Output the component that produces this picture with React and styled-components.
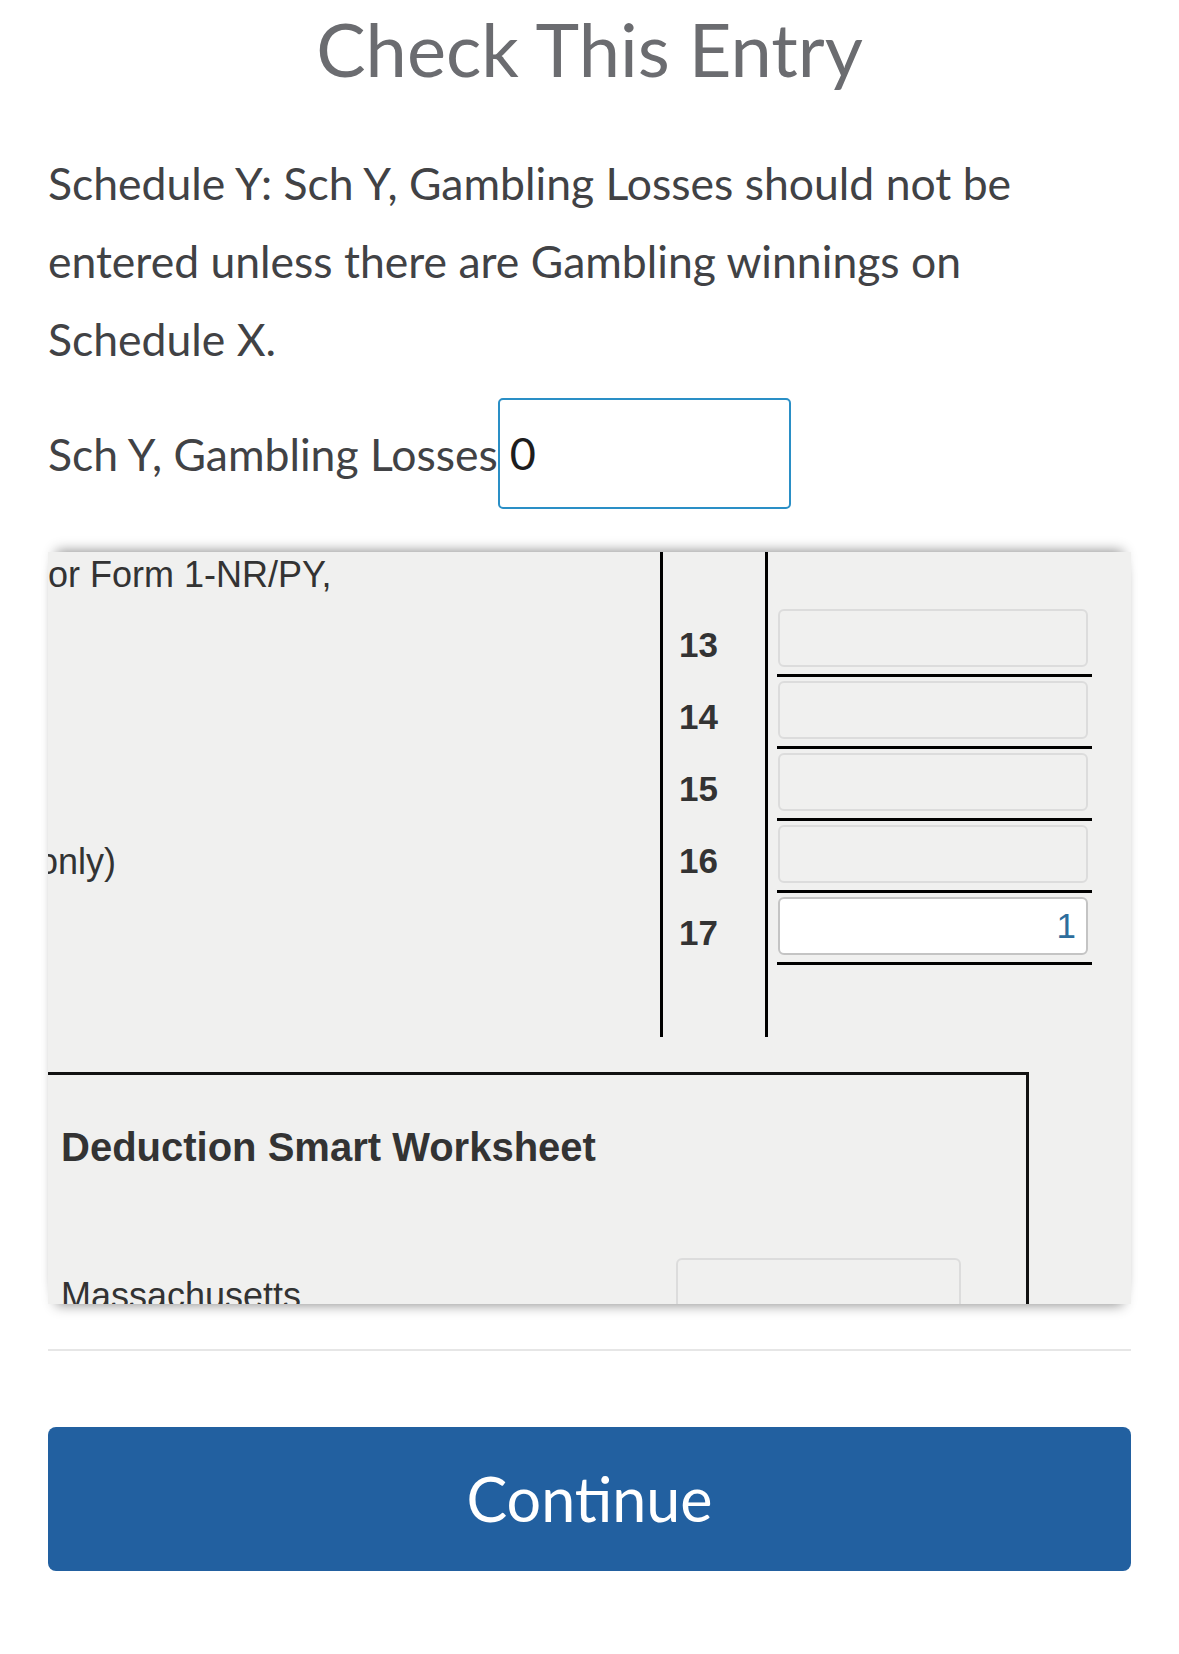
import React from 'react';
import styled, { createGlobalStyle } from 'styled-components';

const GlobalStyle = createGlobalStyle`
  html, body {
    margin: 0;
    padding: 0;
    background: #ffffff;
  }
  * {
    box-sizing: border-box;
  }
`;

const Page = styled.div`
  width: 1179px;
  padding: 0 48px 40px 48px;
  font-family: 'Lato', 'Open Sans', sans-serif;
`;

const Title = styled.h1`
  margin: 5px 0 0;
  text-align: center;
  font-size: 74px;
  font-weight: 400;
  line-height: 1.2;
  color: #6b6c70;
`;

const Message = styled.p`
  margin: 50px 0 0;
  font-size: 44.5px;
  line-height: 78px;
  color: #414245;
`;

const EntryRow = styled.div`
  display: flex;
  align-items: center;
  margin-top: 20px;
  font-size: 44.5px;
  color: #414245;
`;

const EntryInput = styled.input`
  width: 293px;
  height: 111px;
  padding: 0 0 0 10px;
  border: 2px solid #2a8fc6;
  border-radius: 5px;
  font-family: 'Lato', 'Open Sans', sans-serif;
  font-size: 45px;
  color: #1d1d1d;
  background: #fff;
  outline: none;
`;

const Panel = styled.div`
  margin-top: 43px;
  height: 752px;
  background: #f0f0ef;
  overflow: hidden;
  box-shadow: 0 -9px 12px -8px rgba(0, 0, 0, 0.45),
    0 9px 12px -8px rgba(0, 0, 0, 0.45);
  font-family: 'Liberation Sans', Arial, sans-serif;
  color: #333;
`;

const LineGrid = styled.div`
  display: grid;
  grid-template-columns: 612px 108px 324px;
  grid-template-rows: 57px repeat(5, 72px) 68px;
`;

const LabelCell = styled.div`
  font-size: 36px;
  line-height: ${(p) => (p.$head ? '36px' : '58px')};
  padding-top: ${(p) => (p.$head ? '5px' : '8px')};
  white-space: nowrap;
  text-indent: ${(p) => p.$indent || 0}px;
`;

const NumCell = styled.div`
  border-left: 3px solid #000;
  border-right: 3px solid #000;
  padding: 7px 0 0 16px;
  font-size: 35px;
  font-weight: 700;
  line-height: 58px;
`;

const FieldCell = styled.div`
  padding-left: 9px;
`;

const FieldWrap = styled.div`
  width: 315px;
  padding-bottom: 7px;
  border-bottom: 3px solid #000;
  margin-bottom: 4px;
`;

const Field = styled.div`
  width: 310px;
  height: 58px;
  margin-left: 1px;
  padding-right: 10px;
  border: 2px solid ${(p) => (p.$filled ? '#c4c4c4' : '#dcdcdc')};
  border-radius: 6px;
  background: ${(p) => (p.$filled ? '#ffffff' : 'transparent')};
  text-align: right;
  font-size: 35px;
  line-height: 54px;
  color: #2d6d9c;
`;

const WorkBox = styled.div`
  width: 981px;
  height: 300px;
  margin-top: 35px;
  padding: 52px 0 0 13px;
  border-top: 3px solid #111;
  border-right: 3px solid #111;
`;

const BoxTitle = styled.div`
  font-size: 40px;
  font-weight: 700;
  line-height: 40px;
  color: #333;
`;

const BoxRow = styled.div`
  display: flex;
  align-items: flex-start;
  margin-top: 91px;
`;

const BoxLabel = styled.div`
  width: 615px;
  margin-top: 20px;
  font-size: 36px;
  line-height: 36px;
`;

const BoxInput = styled.div`
  width: 285px;
  height: 90px;
  border: 2px solid #dcdcdc;
  border-radius: 6px;
`;

const Divider = styled.div`
  margin-top: 45px;
  height: 2px;
  background: #e6e6e6;
`;

const ContinueButton = styled.button`
  display: block;
  width: 100%;
  height: 144px;
  margin-top: 76px;
  border: none;
  border-radius: 8px;
  background: #2260a0;
  color: #fff;
  font-family: 'Lato', 'Open Sans', sans-serif;
  font-size: 61px;
  cursor: pointer;
`;

const rows = [
  { num: '13', label: '' },
  { num: '14', label: '' },
  { num: '15', label: '' },
  { num: '16', label: 'only)', indent: -10 },
  { num: '17', label: '', value: '1' },
];

const App = () => {
  return (
    <Page>
      <GlobalStyle />
      <Title>Check This Entry</Title>
      <Message>
        Schedule Y: Sch Y, Gambling Losses should not be entered unless there
        are Gambling winnings on Schedule X.
      </Message>
      <EntryRow>
        <span>Sch Y, Gambling Losses</span>
        <EntryInput defaultValue="0" />
      </EntryRow>

      <Panel>
        <LineGrid>
          <LabelCell $head>or Form 1-NR/PY,</LabelCell>
          <NumCell />
          <div />
          {rows.map((row) => (
            <React.Fragment key={row.num}>
              <LabelCell $indent={row.indent}>{row.label}</LabelCell>
              <NumCell>{row.num}</NumCell>
              <FieldCell>
                <FieldWrap>
                  <Field $filled={!!row.value}>{row.value}</Field>
                </FieldWrap>
              </FieldCell>
            </React.Fragment>
          ))}
          <div />
          <NumCell />
          <div />
        </LineGrid>
        <WorkBox>
          <BoxTitle>Deduction Smart Worksheet</BoxTitle>
          <BoxRow>
            <BoxLabel>Massachusetts</BoxLabel>
            <BoxInput />
          </BoxRow>
        </WorkBox>
      </Panel>

      <Divider />
      <ContinueButton>Continue</ContinueButton>
    </Page>
  );
};

export default App;
